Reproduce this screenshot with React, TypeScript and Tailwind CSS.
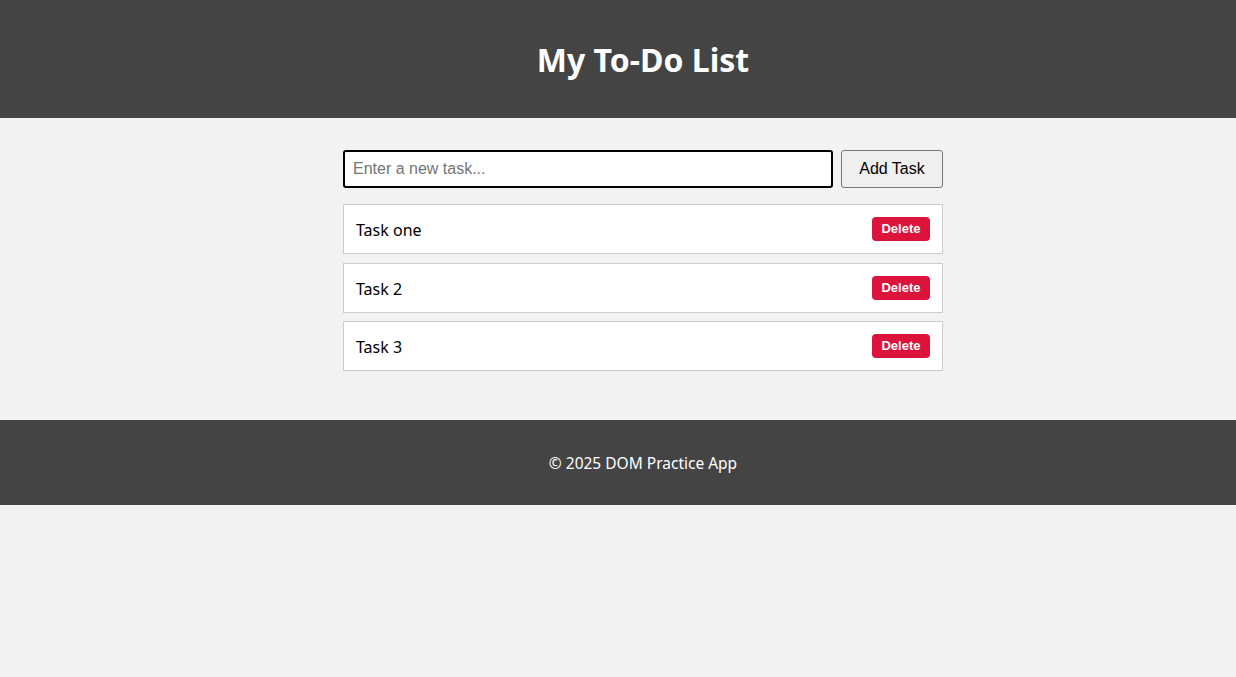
export default function App() {
  const tasks = ['Task one', 'Task 2', 'Task 3'];

  return (
    <div className="min-h-screen bg-[#f2f2f2] font-['Segoe_UI','Noto_Sans',sans-serif]">
      <header className="h-[118px] bg-[#444444] flex items-center justify-center pl-[50px]">
        <h1 className="text-[32px] font-bold text-white leading-none pt-[2px]">My To-Do List</h1>
      </header>

      <main className="pt-8 pb-[49px] pl-[50px]">
        <div className="w-[600px] mx-auto">
          <div className="flex gap-2">
            <input
              type="text"
              placeholder="Enter a new task..."
              className="w-[490px] h-[38px] px-2 border-2 border-black rounded-[3px] bg-white font-['Liberation_Sans',Arial,sans-serif] text-base text-black placeholder:text-[#757575] outline-none"
            />
            <button className="flex-1 h-[38px] border border-[#767676] rounded-[3px] bg-[#efefef] font-['Liberation_Sans',Arial,sans-serif] text-base text-black">
              Add Task
            </button>
          </div>

          <ul className="mt-4 flex flex-col gap-[8.5px]">
            {tasks.map((t) => (
              <li
                key={t}
                className="h-[50px] flex items-center justify-between pl-3 pr-3 bg-white border border-[#cccccc] text-base text-black"
              >
                <span className="pt-[2px]">{t}</span>
                <button className="h-6 w-[58px] rounded bg-[#dc143c] text-white text-[13px] font-bold font-['Liberation_Sans',Arial,sans-serif]">
                  Delete
                </button>
              </li>
            ))}
          </ul>
        </div>
      </main>

      <footer className="h-[85px] bg-[#444444] flex items-center justify-center pl-[50px]">
        <p className="text-[15.5px] text-white pt-[2px]">© 2025 DOM Practice App</p>
      </footer>
    </div>
  );
}
